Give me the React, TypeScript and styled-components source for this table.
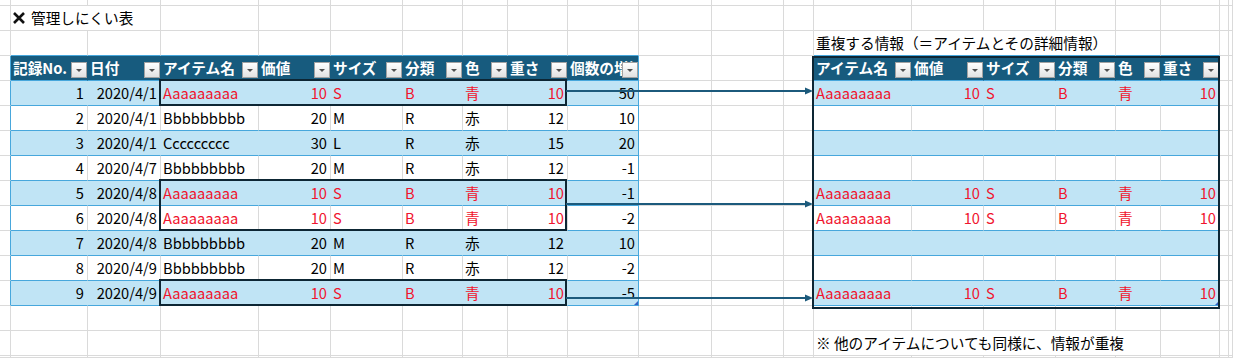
import React from "react";
import styled, { createGlobalStyle, css } from "styled-components";

const GRID = "#dadada";
const HEAD = "#175b7e";
const BAND = "#c0e4f5";
const EDGE = "#47a7dc";
const INK = "#0d2634";
const RED = "#f0142d";
const ARROW = "#1c5a7c";

// column widths, each includes its right gridline
const COLS = [11, 77, 73, 98, 72, 72, 60, 45, 60, 71, 73, 72, 30, 98, 72, 72, 60, 45, 59, 9];
const ROWS = 16;
const COLCOUNT = COLS.length + 1;

const GlobalStyle = createGlobalStyle`
  html, body { margin: 0; padding: 0; background: #fff; }
  body {
    font-family: "Noto Sans CJK JP", "Noto Sans", sans-serif;
    font-size: 14.67px;
    color: #000;
  }
`;

const Sheet = styled.div`
  position: relative;
  display: grid;
  grid-template-columns: ${COLS.map((w) => `${w}px`).join(" ")} 1fr;
  grid-template-rows: 6px repeat(14, 25px) 1fr;
  width: 1233px;
  height: 358px;
  overflow: hidden;
  background: #fff;
`;

type Place = { $r: number; $c: number; $span?: number };

const placed = css<Place>`
  grid-row: ${(p) => p.$r};
  grid-column: ${(p) => `${p.$c} / span ${p.$span ?? 1}`};
  box-sizing: border-box;
  min-width: 0;
  line-height: 24px;
  white-space: nowrap;
`;

const GridCell = styled.div<Place & { $right?: string; $bottom?: string }>`
  ${placed};
  display: flex;
  align-items: center;
  gap: 6px;
  padding-left: 2px;
  border-right: 1px solid ${(p) => p.$right ?? GRID};
  border-bottom: 1px solid ${(p) => p.$bottom ?? GRID};
`;

const HeadCell = styled.div<Place & { $edge?: boolean }>`
  ${placed};
  position: relative;
  overflow: hidden;
  padding-left: 2px;
  background: ${HEAD};
  color: #fff;
  font-weight: 700;
  border-right: 1px solid ${(p) => (p.$edge ? EDGE : HEAD)};
  border-bottom: 1px solid ${EDGE};
`;

const Drop = styled.span`
  position: absolute;
  right: 0;
  bottom: 2px;
  width: 16px;
  height: 16px;
  box-sizing: border-box;
  border: 1px solid #a2a2a2;
  background: linear-gradient(#ffffff, #e2e2e2);

  &::after {
    content: "";
    position: absolute;
    left: 4px;
    top: 6px;
    border-left: 3px solid transparent;
    border-right: 3px solid transparent;
    border-top: 3px solid #505050;
  }
`;

const DataCell = styled.div<
  Place & { $band: boolean; $edge?: boolean; $num?: boolean; $red?: boolean; $handle?: boolean }
>`
  ${placed};
  position: relative;
  overflow: hidden;
  background: ${(p) => (p.$band ? BAND : "#fff")};
  color: ${(p) => (p.$red ? RED : "#000")};
  text-align: ${(p) => (p.$num ? "right" : "left")};
  padding: ${(p) => (p.$num ? "0 3px 0 0" : "0 0 0 2px")};
  border-right: 1px solid ${(p) => (p.$edge ? EDGE : p.$band ? BAND : GRID)};
  border-bottom: 1px solid ${EDGE};

  ${(p) =>
    p.$handle &&
    css`
      &::after {
        content: "";
        position: absolute;
        right: 0;
        bottom: 0;
        border-left: 4px solid transparent;
        border-bottom: 4px solid #3561c2;
      }
    `}
`;

const Frame = styled.div<{ $r: number; $rows: number; $c: number; $cols: number; $m: string }>`
  grid-row: ${(p) => `${p.$r} / span ${p.$rows}`};
  grid-column: ${(p) => `${p.$c} / span ${p.$cols}`};
  margin: ${(p) => p.$m};
  box-sizing: border-box;
  border: 2px solid ${INK};
  z-index: 2;
  pointer-events: none;
`;

const Arrows = styled.svg`
  position: absolute;
  left: 0;
  top: 0;
  z-index: 3;
  pointer-events: none;
`;

const Cross = () => (
  <svg width="12" height="12" viewBox="0 0 12 12">
    <path d="M1 1 L11 11 M11 1 L1 11" stroke="#111" strokeWidth={2.6} />
  </svg>
);

const LEFT_HEADS = ["記録No.", "日付", "アイテム名", "価値", "サイズ", "分類", "色", "重さ", "個数の増減"];
const LEFT_NUM = [true, true, false, true, false, false, false, true, true];
const RIGHT_FROM = [2, 3, 4, 5, 6, 7];

type Rec = { cells: (string | number)[]; dup: boolean };

const RECORDS: Rec[] = [
  { cells: [1, "2020/4/1", "Aaaaaaaaa", 10, "S", "B", "青", 10, 50], dup: true },
  { cells: [2, "2020/4/1", "Bbbbbbbbb", 20, "M", "R", "赤", 12, 10], dup: false },
  { cells: [3, "2020/4/1", "Ccccccccc", 30, "L", "R", "赤", 15, 20], dup: false },
  { cells: [4, "2020/4/7", "Bbbbbbbbb", 20, "M", "R", "赤", 12, -1], dup: false },
  { cells: [5, "2020/4/8", "Aaaaaaaaa", 10, "S", "B", "青", 10, -1], dup: true },
  { cells: [6, "2020/4/8", "Aaaaaaaaa", 10, "S", "B", "青", 10, -2], dup: true },
  { cells: [7, "2020/4/8", "Bbbbbbbbb", 20, "M", "R", "赤", 12, 10], dup: false },
  { cells: [8, "2020/4/9", "Bbbbbbbbb", 20, "M", "R", "赤", 12, -2], dup: false },
  { cells: [9, "2020/4/9", "Aaaaaaaaa", 10, "S", "B", "青", 10, -5], dup: true },
];

const HEAD_ROW = 4;
const FIRST_ROW = 5;
const LAST_ROW = FIRST_ROW + RECORDS.length - 1;
const LEFT_COL = 2;
const RIGHT_COL = 14;

const inLeft = (r: number, c: number) => r >= HEAD_ROW && r <= LAST_ROW && c >= LEFT_COL && c < LEFT_COL + 9;
const inRight = (r: number, c: number) => r >= HEAD_ROW && r <= LAST_ROW && c >= RIGHT_COL && c < RIGHT_COL + 6;
const underSpan = (r: number, c: number) =>
  (r === 2 && c === 3) || (r === 3 && c >= 15 && c <= 17) || (r === 15 && c >= 15 && c <= 18);

const plainCells = () => {
  const out: React.ReactNode[] = [];
  for (let r = 1; r <= ROWS; r++) {
    for (let c = 1; c <= COLCOUNT; c++) {
      if (inLeft(r, c) || inRight(r, c) || underSpan(r, c)) continue;
      const aboveTable = r === HEAD_ROW - 1 && ((c >= LEFT_COL && c < LEFT_COL + 9) || (c >= RIGHT_COL && c < RIGHT_COL + 6));
      const beforeTable = r >= HEAD_ROW && r <= LAST_ROW && (c === LEFT_COL - 1 || c === RIGHT_COL - 1);
      const key = `${r}-${c}`;
      const bottom = aboveTable ? EDGE : undefined;
      const right = beforeTable ? EDGE : undefined;
      if (r === 2 && c === 2) {
        out.push(
          <GridCell key={key} $r={r} $c={c} $span={2}>
            <Cross />
            管理しにくい表
          </GridCell>
        );
      } else if (r === 3 && c === 14) {
        out.push(
          <GridCell key={key} $r={r} $c={c} $span={4} $bottom={bottom}>
            重複する情報（＝アイテムとその詳細情報）
          </GridCell>
        );
      } else if (r === 15 && c === 14) {
        out.push(
          <GridCell key={key} $r={r} $c={c} $span={5}>
            ※ 他のアイテムについても同様に、情報が重複
          </GridCell>
        );
      } else {
        out.push(<GridCell key={key} $r={r} $c={c} $right={right} $bottom={bottom} />);
      }
    }
  }
  return out;
};

const App = () => {
  return (
    <>
      <GlobalStyle />
      <Sheet>
        {plainCells()}

        {LEFT_HEADS.map((h, i) => (
          <HeadCell key={`lh${i}`} $r={HEAD_ROW} $c={LEFT_COL + i} $edge={i === LEFT_HEADS.length - 1}>
            {h}
            <Drop />
          </HeadCell>
        ))}
        {RECORDS.map((rec, ri) =>
          rec.cells.map((v, ci) => (
            <DataCell
              key={`ld${ri}-${ci}`}
              $r={FIRST_ROW + ri}
              $c={LEFT_COL + ci}
              $band={ri % 2 === 0}
              $num={LEFT_NUM[ci]}
              $red={rec.dup && ci >= 2 && ci <= 7}
              $edge={ci === 8}
              $handle={ci === 8 && ri === RECORDS.length - 1}
            >
              {v}
            </DataCell>
          ))
        )}

        {RIGHT_FROM.map((src, i) => (
          <HeadCell key={`rh${i}`} $r={HEAD_ROW} $c={RIGHT_COL + i} $edge={i === RIGHT_FROM.length - 1}>
            {LEFT_HEADS[src]}
            <Drop />
          </HeadCell>
        ))}
        {RECORDS.map((rec, ri) =>
          RIGHT_FROM.map((src, i) => (
            <DataCell
              key={`rd${ri}-${i}`}
              $r={FIRST_ROW + ri}
              $c={RIGHT_COL + i}
              $band={ri % 2 === 0}
              $num={LEFT_NUM[src]}
              $red={rec.dup}
              $edge={i === RIGHT_FROM.length - 1}
              $handle={i === RIGHT_FROM.length - 1 && ri === RECORDS.length - 1}
            >
              {rec.dup ? rec.cells[src] : ""}
            </DataCell>
          ))
        )}

        <Frame $r={5} $rows={1} $c={4} $cols={6} $m="-2px 1px 0 -2px" />
        <Frame $r={9} $rows={2} $c={4} $cols={6} $m="-2px 1px 0 -2px" />
        <Frame $r={13} $rows={1} $c={4} $cols={6} $m="-2px 1px 0 -2px" />
        <Frame $r={HEAD_ROW} $rows={10} $c={RIGHT_COL} $cols={6} $m="0 0 -3px -2px" />

        <Arrows width="1233" height="358" viewBox="0 0 1233 358">
          {[91, 204, 298].map((y) => (
            <g key={y}>
              <line x1={566} y1={y} x2={806} y2={y} stroke={ARROW} strokeWidth={2} />
              <polygon points={`805,${y - 3.5} 813,${y} 805,${y + 3.5}`} fill={ARROW} />
            </g>
          ))}
        </Arrows>
      </Sheet>
    </>
  );
};

export default App;
